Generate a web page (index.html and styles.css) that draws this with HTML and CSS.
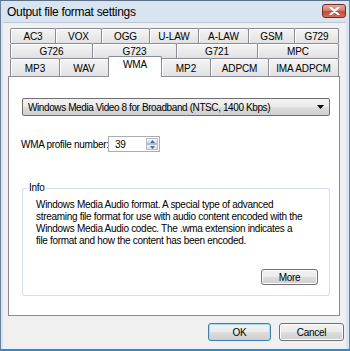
FILE: index.html
```html
<!DOCTYPE html>
<html>
<head>
<meta charset="utf-8">
<link rel="stylesheet" href="styles.css">
</head>
<body>
<div class="window">
  <div class="titlebar">
    <span class="title">Output file format settings</span>
    <div class="close">
      <svg width="11" height="8" viewBox="0 0 11 8"><path d="M1.5 0.5 L9.5 7.5 M9.5 0.5 L1.5 7.5" stroke="#ffffff" stroke-width="2.2" stroke-linecap="round"/></svg>
    </div>
  </div>
  <div class="body">
    <div class="tabs">
      <div class="tabrow r1">
        <div class="tab w46">AC3</div>
        <div class="tab w47">VOX</div>
        <div class="tab w49">OGG</div>
        <div class="tab w50">U-LAW</div>
        <div class="tab w51">A-LAW</div>
        <div class="tab w47">GSM</div>
        <div class="tab w45">G729</div>
      </div>
      <div class="tabrow r2">
        <div class="tab w83">G726</div>
        <div class="tab w85">G723</div>
        <div class="tab w82">G721</div>
        <div class="tab w82">MPC</div>
      </div>
      <div class="tabrow r3">
        <div class="tab w50">MP3</div>
        <div class="tab w50">WAV</div>
        <div class="tab w54 selected">WMA</div>
        <div class="tab w50">MP2</div>
        <div class="tab w59">ADPCM</div>
        <div class="tab w71">IMA ADPCM</div>
      </div>
    </div>
    <div class="pane">
      <div class="select">
        <span class="select-text">Windows Media Video 8 for Broadband (NTSC, 1400 Kbps)</span>
        <svg class="arrow" width="7" height="4" viewBox="0 0 7 4"><path d="M0 0 H7 L3.5 4 Z" fill="#000"/></svg>
      </div>
      <div class="profile">
        <span class="label">WMA profile number:</span>
        <div class="spin">
          <span class="spin-val">39</span>
          <div class="spin-btns">
            <div class="spin-btn"><svg width="5" height="3" viewBox="0 0 5 3"><path d="M0 3 H5 L2.5 0 Z" fill="#3b6db5"/></svg></div>
            <div class="spin-btn"><svg width="5" height="3" viewBox="0 0 5 3"><path d="M0 0 H5 L2.5 3 Z" fill="#3b6db5"/></svg></div>
          </div>
        </div>
      </div>
      <div class="info">
        <div class="info-head">
          <span class="seg-left"></span>
          <span class="info-title">Info</span>
          <span class="seg-right"></span>
        </div>
        <div class="info-body">
          <p class="desc">Windows Media Audio format. A special type of advanced<br>streaming file format for use with audio content encoded with the<br>Windows Media Audio codec. The .wma extension indicates a<br>file format and how the content has been encoded.</p>
          <div class="more-row"><div class="btn more">More</div></div>
        </div>
      </div>
    </div>
    <div class="buttons">
      <div class="btn ok">OK</div>
      <div class="btn cancel">Cancel</div>
    </div>
  </div>
</div>
</body>
</html>
```
FILE: styles.css
```css
html, body {
  margin: 0;
  padding: 0;
  background: #ffffff;
}
body {
  font-family: "Liberation Sans", Arial, sans-serif;
  font-size: 10px;
  letter-spacing: -0.3px;
  color: #000;
}
.window {
  width: 350px;
  height: 351px;
  box-sizing: border-box;
  display: flex;
  flex-direction: column;
  background: #d9e4f1;
  border-top: 1px solid #5b6f89;
  border-left: 1px solid #6b7f99;
  border-right: 1px solid #6b7f99;
  border-bottom: 2px solid #2e8ccc;
  overflow: hidden;
}
.titlebar {
  height: 21px;
  display: flex;
  align-items: flex-start;
  flex-shrink: 0;
}
.title {
  margin-left: 6px;
  margin-top: 4px;
  font-size: 12px;
  letter-spacing: -0.3px;
  color: #000;
}
.close {
  margin-left: auto;
  margin-right: 3px;
  margin-top: 3px;
  width: 24px;
  height: 14px;
  box-sizing: border-box;
  border: 1px solid #6e2e27;
  border-radius: 3px;
  background: linear-gradient(#e8a899 0%, #d67b6a 45%, #c24a39 55%, #d2705f 100%);
  display: flex;
  align-items: center;
  justify-content: center;
}
.body {
  flex: 1;
  margin-left: 2px;
  margin-right: 3px;
  background: #f0f0f0;
  display: flex;
  flex-direction: column;
  border-top: 1px solid #b9c6d6;
}
.tabs {
  margin-top: 5px;
  margin-left: 7px;
  display: flex;
  flex-direction: column;
}
.tabrow {
  display: flex;
  align-items: flex-start;
}
.tabrow.r1, .tabrow.r2 { height: 15px; }
.tabrow.r3 { height: 18px; }
.tab {
  box-sizing: border-box;
  border: 1px solid #898c95;
  border-bottom: none;
  border-radius: 2px 2px 0 0;
  background: linear-gradient(#f4f4f4, #e2e2e2);
  display: flex;
  align-items: center;
  justify-content: center;
  margin-left: -1px;
  white-space: nowrap;
  box-shadow: inset 1px 1px 0 #ffffff;
  letter-spacing: -0.1px;
}
.tab:first-child { margin-left: 0; }
.r1 .tab, .r2 .tab { height: 15px; padding-top: 1px; }
.r3 .tab { height: 18px; padding-top: 1px; }
.r3 .tab.selected {
  position: relative;
  z-index: 1;
  height: 21px;
  margin-top: -2px;
  background: #ffffff;
  box-shadow: none;
  align-items: flex-start;
  padding-top: 2px;
}
.w45 { width: 45px; }
.w46 { width: 46px; }
.w47 { width: 47px; }
.w49 { width: 49px; }
.w50 { width: 50px; }
.w51 { width: 51px; }
.w54 { width: 54px; }
.w59 { width: 59px; }
.w71 { width: 71px; }
.w82 { width: 82px; }
.w83 { width: 83px; }
.w85 { width: 85px; }
.pane {
  margin-left: 5px;
  width: 332px;
  height: 240px;
  box-sizing: border-box;
  background: #ffffff;
  border: 1px solid #898c95;
  padding: 21px 0 0 13px;
  display: flex;
  flex-direction: column;
}
.select {
  width: 308px;
  height: 18px;
  box-sizing: border-box;
  border: 1px solid #707070;
  border-radius: 2px;
  background: linear-gradient(#f2f2f2 0%, #ebebeb 50%, #dddddd 51%, #cfcfcf 100%);
  display: flex;
  align-items: center;
  padding-left: 5px;
  padding-right: 5px;
}
.select-text { flex: 1; white-space: nowrap; letter-spacing: -0.4px; }
.profile {
  margin-top: 20px;
  margin-left: -1px;
  display: flex;
  align-items: center;
  height: 16px;
}
.label { width: 87px; white-space: nowrap; }
.spin {
  width: 52px;
  height: 16px;
  box-sizing: border-box;
  border: 1px solid #abadb3;
  display: flex;
  align-items: center;
  padding-left: 6px;
}
.spin-val { flex: 1; }
.spin-btns {
  display: flex;
  flex-direction: column;
  margin-right: 1px;
  width: 12px;
}
.spin-btn {
  height: 6px;
  box-sizing: border-box;
  border: 1px solid #b8bcc3;
  background: linear-gradient(#f6f6f6, #dcdcdc);
  display: flex;
  align-items: center;
  justify-content: center;
}
.info {
  margin-top: 30px;
  width: 308px;
  display: flex;
  flex-direction: column;
}
.info-head {
  display: flex;
  height: 12px;
}
.seg-left, .seg-right {
  margin-top: 6px;
  height: 6px;
  box-sizing: border-box;
  border-top: 1px solid #d5dfe5;
}
.seg-left {
  width: 5px;
  border-left: 1px solid #d5dfe5;
  border-top-left-radius: 3px;
}
.seg-right {
  flex: 1;
  border-right: 1px solid #d5dfe5;
  border-top-right-radius: 3px;
}
.info-title {
  padding: 0 2px;
  line-height: 12px;
}
.info-body {
  height: 102px;
  box-sizing: border-box;
  border: 1px solid #d5dfe5;
  border-top: none;
  border-radius: 0 0 3px 3px;
  padding-left: 13px;
  display: flex;
  flex-direction: column;
}
.desc {
  margin: 5px 0 0 0;
  line-height: 12px;
  white-space: nowrap;
}
.more-row {
  margin-top: auto;
  margin-bottom: 10px;
  display: flex;
  justify-content: flex-end;
  padding-right: 11px;
}
.btn {
  box-sizing: border-box;
  border: 1px solid #707070;
  border-radius: 3px;
  background: linear-gradient(#f2f2f2 0%, #ebebeb 50%, #dddddd 51%, #cfcfcf 100%);
  display: flex;
  align-items: center;
  justify-content: center;
  box-shadow: inset 0 0 0 1px #fcfcfc;
}
.more { width: 57px; height: 16px; }
.buttons {
  margin-top: 7px;
  display: flex;
  justify-content: flex-end;
  gap: 8px;
  padding-right: 2px;
}
.ok { width: 63px; height: 18px; border-color: #3c7fb1; box-shadow: inset 0 0 0 1px #a8d8f4; }
.cancel { width: 65px; height: 18px; }
```
